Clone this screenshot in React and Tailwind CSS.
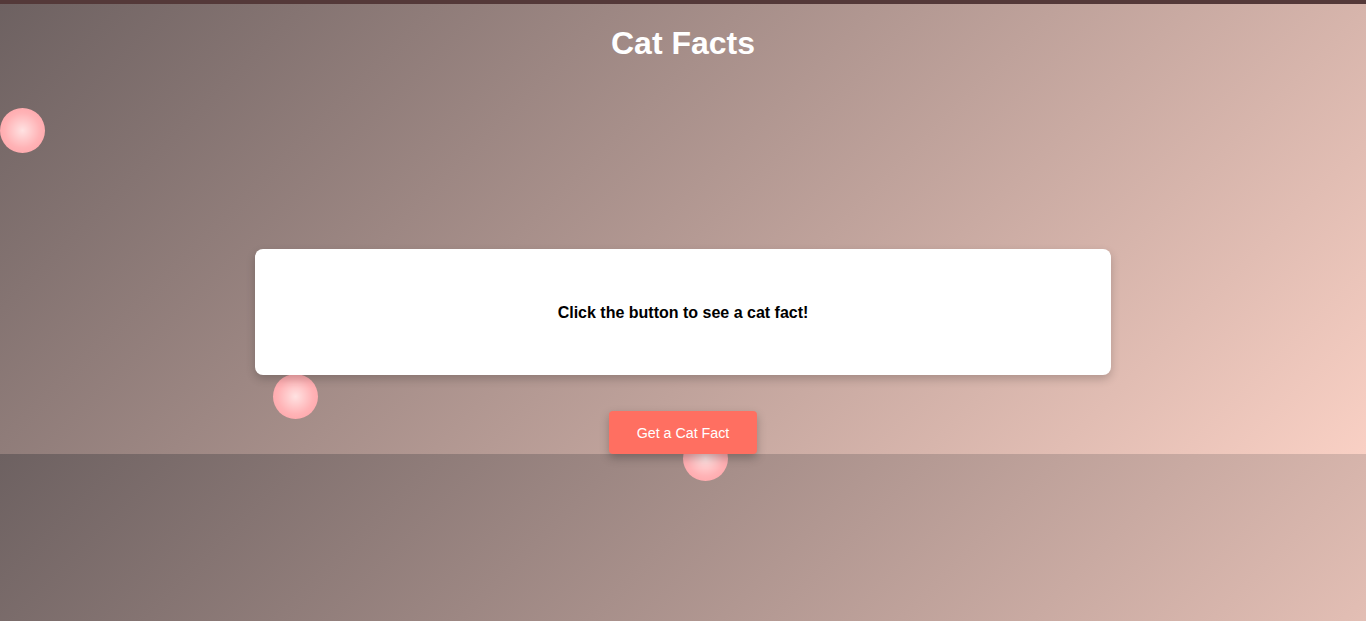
export default function App() {
  const bubbles = [
    "left-[0px] top-[108px]",
    "left-[273px] top-[374px]",
    "left-[683px] top-[436px]",
  ];
  return (
    <div className="relative min-h-screen w-full overflow-hidden bg-[linear-gradient(135deg,#6d6161,#f9d0c4)] bg-[length:100%_454px] bg-repeat-y font-['Liberation_Sans',Arial,sans-serif]">
      <div className="h-[4px] w-full bg-[#543939]" />
      <div className="relative z-10 flex h-[450px] flex-col items-center">
        <h1 className="mt-[21px] text-[32px] font-bold leading-[37px] text-white">
          Cat Facts
        </h1>
        <div className="mt-[187px] flex h-[126px] w-[856px] items-center justify-center rounded-lg bg-white pt-[2px] shadow-[0_4px_10px_rgba(0,0,0,0.2)]">
          <p className="text-[16px] font-bold text-black">
            Click the button to see a cat fact!
          </p>
        </div>
        <button className="mt-[36px] h-[43px] w-[148px] rounded bg-[#ff6f61] pt-[3px] text-[14.25px] text-white shadow-[0_4px_10px_rgba(0,0,0,0.25)]">
          Get a Cat Fact
        </button>
      </div>
      {bubbles.map((pos, i) => (
        <div
          key={i}
          className={`absolute z-0 h-[45px] w-[45px] rounded-full bg-[radial-gradient(circle,#ffe2e2_0%,#ffb3b6_55%,#ff9ea3_100%)] ${pos}`}
        />
      ))}
    </div>
  );
}
